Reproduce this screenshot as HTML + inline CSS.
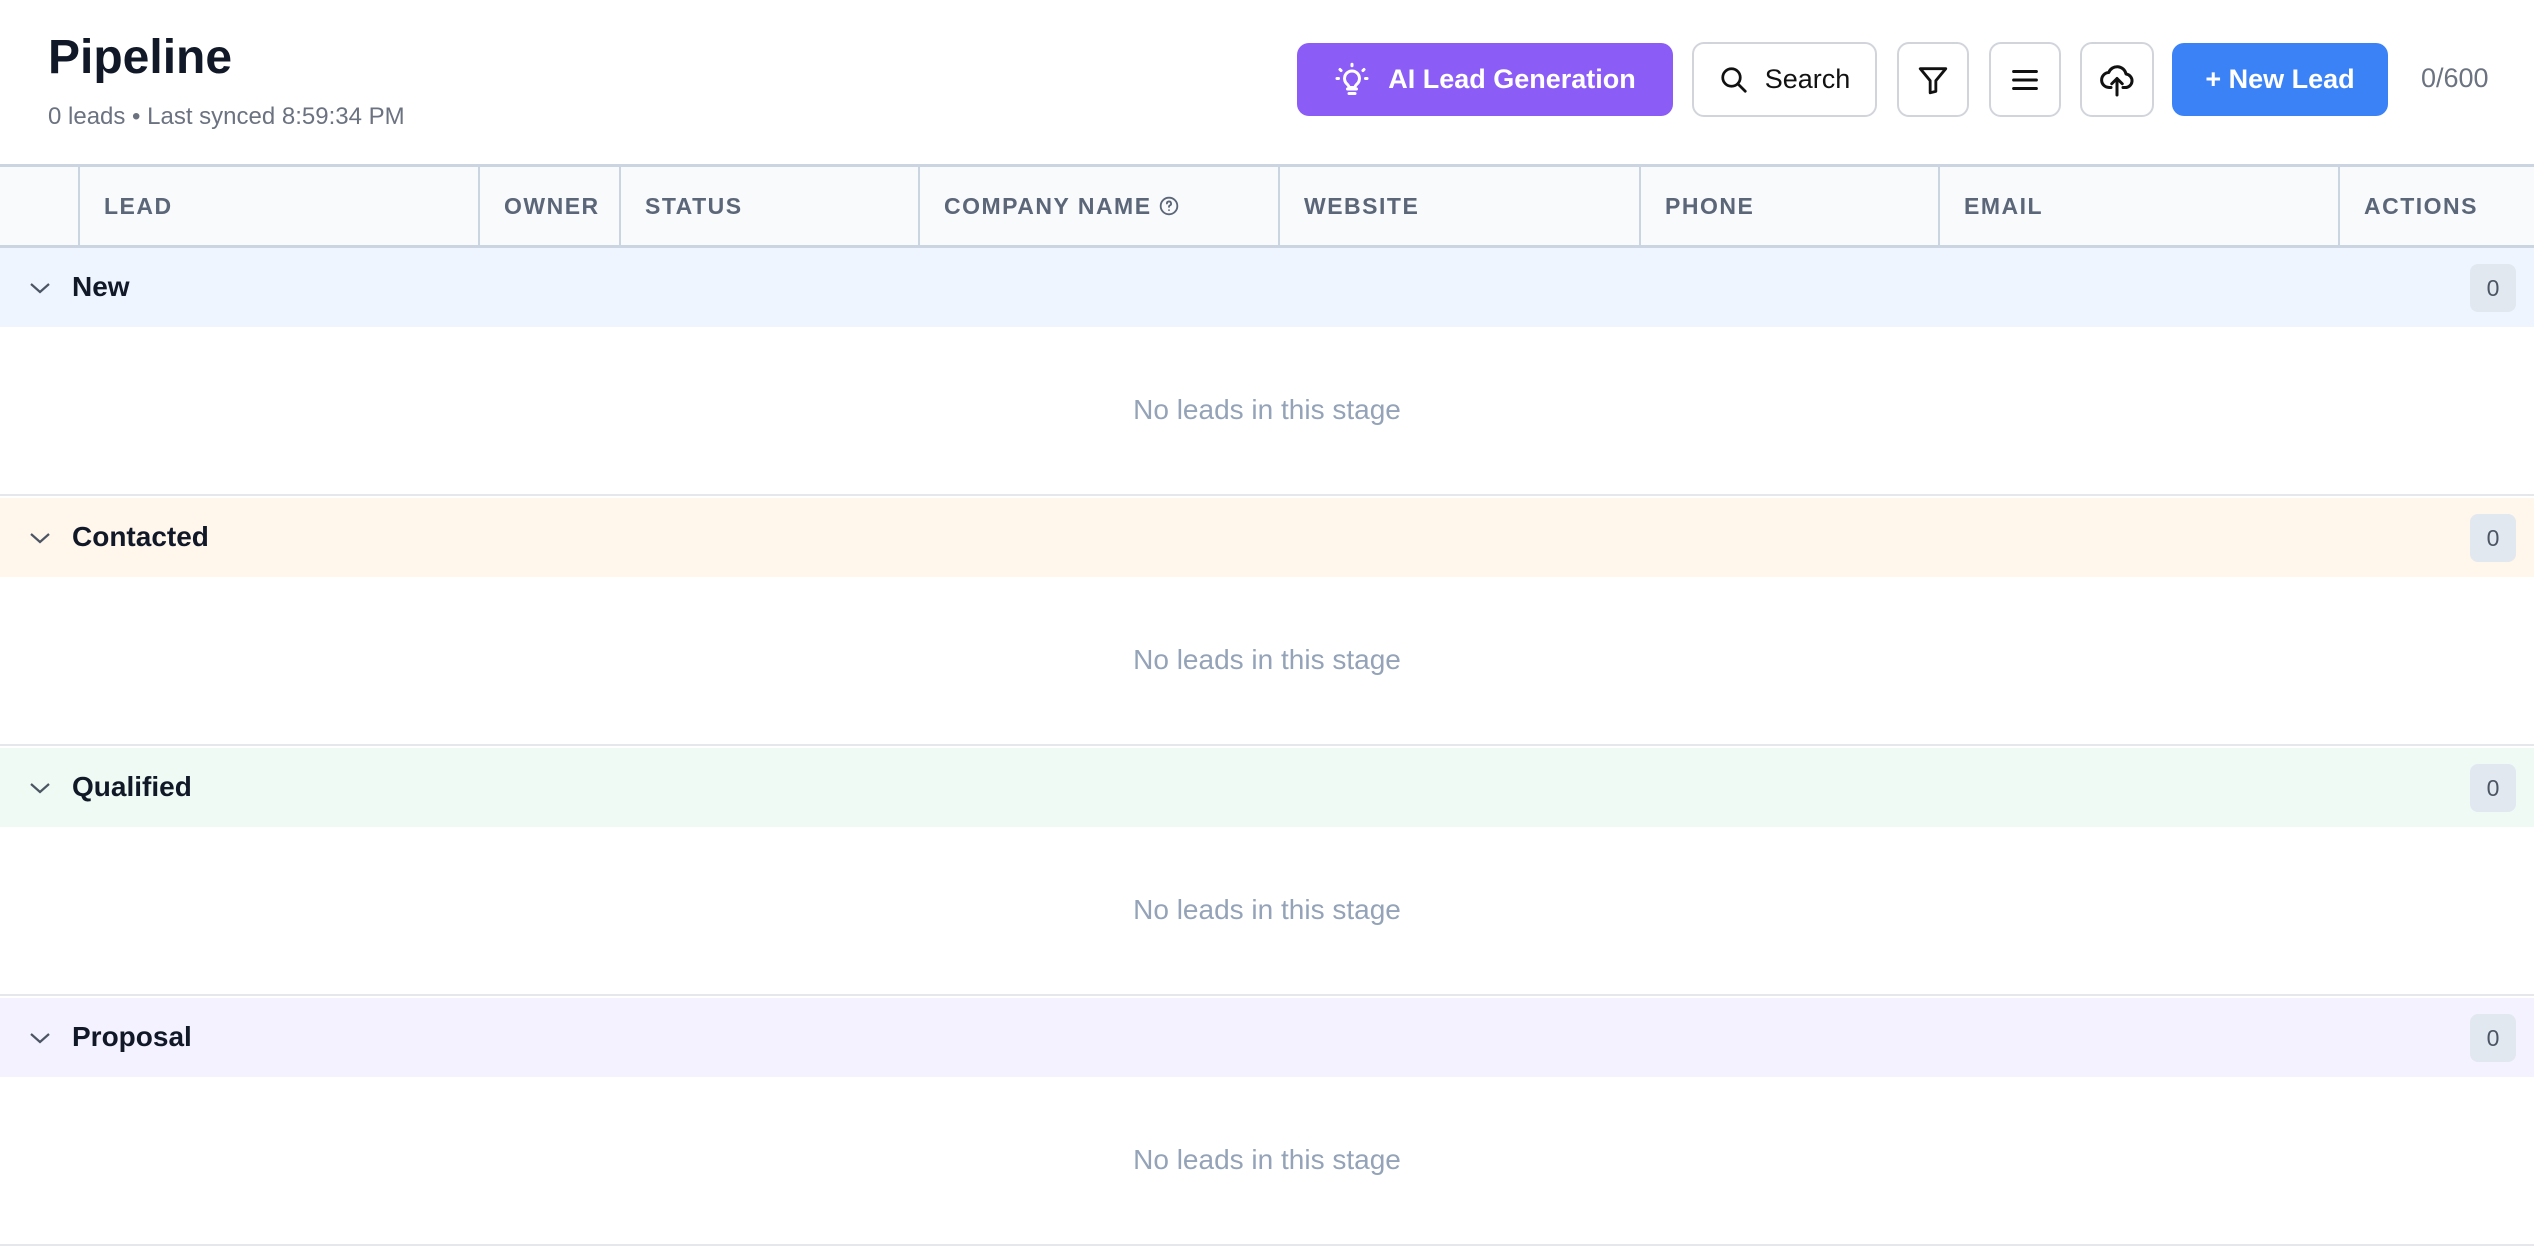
<!DOCTYPE html>
<html><head><meta charset="utf-8"><style>
*{box-sizing:border-box;margin:0;padding:0}
body{width:2534px;height:1250px;background:#fff;font-family:"Liberation Sans",Arial,sans-serif;position:relative;overflow:hidden}
.abs{position:absolute}
h1{position:absolute;left:48px;top:30px;font-size:48px;font-weight:700;color:#111827}
.sub{position:absolute;left:48px;top:103px;font-size:24px;color:#6b7280}
.btn{position:absolute;top:43px;height:73px;border-radius:12px;display:flex;align-items:center;justify-content:center;font-size:27px}
.out{border:2px solid #d1d5db;background:#fff;color:#111;top:42px;height:75px}
.thead{position:absolute;left:0;top:164px;width:2534px;height:84px;background:#f8fafc;border-top:3px solid #cbd5e1;border-bottom:3px solid #cbd5e1}
.th{position:absolute;top:0;height:78px;line-height:78px;font-size:23px;font-weight:700;color:#5b6678;letter-spacing:1.5px;border-left:2px solid #cbd5e1;padding-left:24px}
.grp{position:absolute;left:0;width:2534px;height:79px}
.grp .t{position:absolute;left:72px;top:23px;font-size:28px;font-weight:700;color:#111827}
.badge{position:absolute;left:2470px;top:16px;width:46px;height:48px;border-radius:8px;background:#e2e8f0;color:#4b5563;font-size:23px;text-align:center;line-height:48px}
.empty{position:absolute;left:0;width:2534px;height:169px;border-bottom:2px solid #e5e7eb;text-align:center;font-size:28px;color:#94a3b8;line-height:165px}
</style></head><body>
<h1>Pipeline</h1>
<div class="sub">0 leads • Last synced 8:59:34 PM</div>

<div class="btn" style="left:1297px;width:376px;background:#8b5cf6;color:#fff;font-weight:700">
<svg width="36" height="36" viewBox="0 0 24 24" fill="none" stroke="#fff" stroke-width="2" stroke-linecap="round" style="margin-right:18px"><path d="M9 18h6M10 21h4M12 6a5 5 0 0 0-3 9c.6.6 1 1.3 1 2h4c0-.7.4-1.4 1-2a5 5 0 0 0-3-9z"/><path d="M12 1.5v1M4 5l.7.7M20 5l-.7.7M2 11h1M21 11h1"/></svg>AI Lead Generation</div>
<div class="btn out" style="left:1692px;width:185px">
<svg width="30" height="30" viewBox="0 0 24 24" fill="none" stroke="#111" stroke-width="2.2" stroke-linecap="round" style="margin-right:16px"><circle cx="10" cy="10" r="7"/><path d="M15.5 15.5L21 21"/></svg>Search</div>
<div class="btn out" style="left:1897px;width:72px"><svg width="34" height="34" viewBox="0 0 24 24" fill="none" stroke="#111" stroke-width="2" stroke-linejoin="round"><path d="M3 4h18l-7 8.5V20l-4 1v-8.5z"/></svg></div>
<div class="btn out" style="left:1989px;width:72px"><svg width="34" height="34" viewBox="0 0 24 24" fill="none" stroke="#111" stroke-width="2.2" stroke-linecap="round"><path d="M4 6h16M4 12h16M4 18h16"/></svg></div>
<div class="btn out" style="left:2080px;width:74px"><svg width="36" height="36" viewBox="0 0 24 24" fill="none" stroke="#111" stroke-width="2" stroke-linecap="round" stroke-linejoin="round"><path d="M8 17H7a5 5 0 0 1-.5-10A6 6 0 0 1 18 8a4.5 4.5 0 0 1-1 9h-1"/><path d="M12 22V11M8.5 14.5L12 11l3.5 3.5"/></svg></div>
<div class="btn" style="left:2172px;width:216px;background:#3b82f6;color:#fff;font-weight:700">+ New Lead</div>
<div class="abs" style="left:2421px;top:63px;font-size:27px;color:#6b7280">0/600</div>

<div class="thead">
<div class="th" style="left:78px;width:400px">LEAD</div>
<div class="th" style="left:478px;width:141px">OWNER</div>
<div class="th" style="left:619px;width:299px">STATUS</div>
<div class="th" style="left:918px;width:360px">COMPANY NAME <svg width="20" height="20" viewBox="0 0 24 24" fill="none" stroke="#5b6678" stroke-width="2.2" style="vertical-align:-2px"><circle cx="12" cy="12" r="10"/><path d="M9.5 9a2.5 2.5 0 1 1 3.5 2.3c-.7.3-1 .9-1 1.7M12 17h.01" stroke-linecap="round"/></svg></div>
<div class="th" style="left:1278px;width:361px">WEBSITE</div>
<div class="th" style="left:1639px;width:299px">PHONE</div>
<div class="th" style="left:1938px;width:400px">EMAIL</div>
<div class="th" style="left:2338px;width:196px">ACTIONS</div>
</div>

<div class="grp" style="top:248px;background:#eff5ff"><svg width="24" height="14" viewBox="0 0 24 14" style="position:absolute;left:28px;top:33px"><path d="M3 3l9 8 9-8" fill="none" stroke="#4b5563" stroke-width="2.2"/></svg><div class="t">New</div><div class="badge">0</div></div>
<div class="empty" style="top:327px">No leads in this stage</div>
<div class="grp" style="top:498px;background:#fff6ec"><svg width="24" height="14" viewBox="0 0 24 14" style="position:absolute;left:28px;top:33px"><path d="M3 3l9 8 9-8" fill="none" stroke="#4b5563" stroke-width="2.2"/></svg><div class="t">Contacted</div><div class="badge">0</div></div>
<div class="empty" style="top:577px">No leads in this stage</div>
<div class="grp" style="top:748px;background:#eefaf3"><svg width="24" height="14" viewBox="0 0 24 14" style="position:absolute;left:28px;top:33px"><path d="M3 3l9 8 9-8" fill="none" stroke="#4b5563" stroke-width="2.2"/></svg><div class="t">Qualified</div><div class="badge">0</div></div>
<div class="empty" style="top:827px">No leads in this stage</div>
<div class="grp" style="top:998px;background:#f5f2ff"><svg width="24" height="14" viewBox="0 0 24 14" style="position:absolute;left:28px;top:33px"><path d="M3 3l9 8 9-8" fill="none" stroke="#4b5563" stroke-width="2.2"/></svg><div class="t">Proposal</div><div class="badge">0</div></div>
<div class="empty" style="top:1077px">No leads in this stage</div>
</body></html>
